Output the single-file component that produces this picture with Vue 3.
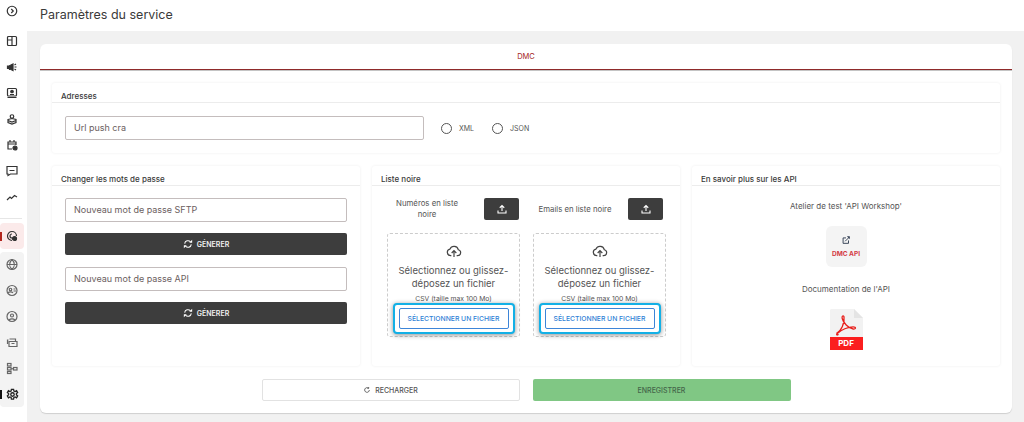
<script setup>
const passwordRows = ["Nouveau mot de passe SFTP", "Nouveau mot de passe API"];
const blacklist = [
  { label: "Numéros en liste noire" },
  { label: "Emails en liste noire" },
];
</script>

<template>
  <div class="page">
    <aside class="sidebar">
      <div class="side-top">
        <svg class="ico first" viewBox="0 0 24 24"><circle cx="12" cy="12" r="9.500" /><path d="M10.500 8l4 4-4 4" /></svg>
        <svg class="ico" viewBox="0 0 24 24"><rect x="3" y="3" width="18" height="18" rx="2" /><path d="M3 10h9M12 3v18" /></svg>
        <svg class="ico" viewBox="0 0 24 24"><path class="solid" d="M3 10v5h3l8 4V6l-8 4H3z" /><path d="M7 15v3M17 8l3-2M17 12h4M17 16l3 2" /></svg>
        <svg class="ico" viewBox="0 0 24 24"><rect x="3" y="3" width="18" height="15" rx="2" /><circle class="solid" cx="12" cy="9" r="2.500" /><path d="M8 15h8M3 21h18" /></svg>
        <svg class="ico" viewBox="0 0 24 24"><circle cx="12" cy="7" r="3.500" /><path d="M4 13l8-2 8 2v6l-8 3-8-3zM4 15l8 3 8-3" /></svg>
        <svg class="ico" viewBox="0 0 24 24"><path d="M12 20H4V6h16v6M4 10h16M8 2v5M16 2v5" /><circle class="solid" cx="18" cy="18" r="4" /></svg>
        <svg class="ico" viewBox="0 0 24 24"><path d="M2 3h20v15H9l-5 3v-3H2zM7 11h10" /></svg>
        <svg class="ico" viewBox="0 0 24 24"><path d="M2 18l6-6 3 3 6-6 5 3" /></svg>
      </div>
      <div class="side-rule"></div>
      <div class="side-active">
        <span class="mark red"></span>
        <svg class="ico" viewBox="0 0 24 24"><path d="M12 21a9 9 0 1 1 9-9" /><path d="M12 8a4 4 0 0 0 0 8" /><circle class="solid" cx="17" cy="17" r="4" /></svg>
      </div>
      <div class="side-group">
        <svg class="ico soft" viewBox="0 0 24 24"><circle cx="12" cy="12" r="10" /><path d="M2 12h20M12 2c-6 6-6 14 0 20M12 2c6 6 6 14 0 20" /></svg>
        <svg class="ico soft" viewBox="0 0 24 24"><circle cx="12" cy="12" r="10" /><circle cx="9" cy="10" r="2.500" /><path d="M4 17c2-3 8-3 10 0M15 9h4M15 13h5" /></svg>
        <svg class="ico soft" viewBox="0 0 24 24"><circle cx="12" cy="12" r="10" /><circle cx="12" cy="10" r="3" /><path d="M6 19c3-3 9-3 12 0" /></svg>
        <svg class="ico soft" viewBox="0 0 24 24"><path d="M7 5h12v4M3 15V7h2M6 10h16v10H6zM11 14h6" /></svg>
        <svg class="ico soft" viewBox="0 0 24 24"><rect x="3" y="2" width="7" height="5" /><rect x="3" y="10" width="7" height="5" /><rect x="3" y="18" width="7" height="4" /><rect x="15" y="10" width="7" height="5" /><path d="M10 12.500h5" /></svg>
        <div class="gear-wrap">
          <span class="mark dark"></span>
          <svg class="ico gear" viewBox="0 0 24 24"><circle cx="12" cy="12" r="3.200" /><path d="M10 2.500h4l.6 3 2.200 1 2.700-1.500 2 3.400-2.300 2v2.200l2.300 2-2 3.400-2.700-1.500-2.200 1-.6 3h-4l-.6-3-2.200-1-2.700 1.500-2-3.400 2.300-2v-2.200l-2.300-2 2-3.400 2.700 1.500 2.200-1z" /></svg>
        </div>
      </div>
    </aside>

    <main class="content">
      <header class="topbar">Paramètres du service</header>

      <section class="main-card">
        <div class="tab">DMC</div>

        <div class="card-body">
          <div class="panel address">
            <h2 class="panel-title">Adresses</h2>
            <div class="address-row">
              <div class="field url">Url push cra</div>
              <label class="radio"><span class="dot"></span>XML</label>
              <label class="radio"><span class="dot"></span>JSON</label>
            </div>
          </div>

          <div class="columns">
            <div class="panel">
              <h2 class="panel-title">Changer les mots de passe</h2>
              <div class="password-body">
                <template v-for="row in passwordRows" :key="row">
                  <div class="field">{{ row }}</div>
                  <button class="dark-btn">
                    <svg class="sync" viewBox="0 0 24 24"><path d="M4 11a8 8 0 0 1 14-4M20 13a8 8 0 0 1-14 4" /><path class="fill" d="M15 9h7V2zM9 15H2v7z" /></svg>
                    GÉNERER
                  </button>
                </template>
              </div>
            </div>

            <div class="panel">
              <h2 class="panel-title">Liste noire</h2>
              <div class="black-body">
                <div class="black-col" v-for="item in blacklist" :key="item.label">
                  <div class="black-head">
                    <span class="black-label">{{ item.label }}</span>
                    <button class="upload-btn">
                      <svg viewBox="0 0 24 24"><path d="M12 16V5M7.500 9.500L12 5l4.500 4.500M4 15v5h16v-5" /></svg>
                    </button>
                  </div>
                  <div class="dropzone">
                    <svg class="cloud" viewBox="0 0 24 24"><path d="M8 19H7a5 5 0 0 1-1-9.900 6.500 6.500 0 0 1 12.400 1A4.500 4.500 0 0 1 17.500 19H16" /><path d="M12 21v-9M8.500 15l3.500-3.500 3.500 3.500" /></svg>
                    <p class="drop-text">Sélectionnez ou glissez-déposez un fichier</p>
                    <p class="drop-hint">CSV (taille max 100 Mo)</p>
                    <div class="highlight">
                      <button class="select-btn">SÉLECTIONNER UN FICHIER</button>
                    </div>
                  </div>
                </div>
              </div>
            </div>

            <div class="panel">
              <h2 class="panel-title">En savoir plus sur les API</h2>
              <div class="api-body">
                <p class="api-text">Atelier de test 'API Workshop'</p>
                <div class="api-tile">
                  <svg viewBox="0 0 24 24"><path d="M18 13v7H5V7h7" /><path d="M10 15l9-9" /><path class="fill" d="M14 3h7v7z" /></svg>
                  <span>DMC API</span>
                </div>
                <p class="api-text doc">Documentation de l'API</p>
                <div class="pdf">
                  <svg class="pdf-page" viewBox="0 0 33 41">
                    <path d="M1 0h23l9 9v32H0V1z" fill="#f2f2f2" />
                    <path d="M24 0l9 9h-9z" fill="#e4e4e4" />
                    <path d="M7 24c4-2 8-10 7-16-.4-2-2.500-1-1.800 1.500 1 4 6 10 11 10.500 3 .3 3-2.200 0-2.200-5 0-12 3-16 6.700-1.300 1.300 0 2 .8 1z" fill="none" stroke="#e8201c" stroke-width="1.300" />
                  </svg>
                  <span class="pdf-band">PDF</span>
                </div>
              </div>
            </div>
          </div>

          <div class="actions">
            <button class="reload">
              <svg viewBox="0 0 24 24"><path d="M19 12a7 7 0 1 1-2.500-5.400M17 3v4h-4" /></svg>
              RECHARGER
            </button>
            <button class="save">ENREGISTRER</button>
          </div>
        </div>
      </section>
    </main>
  </div>
</template>

<style>
html,
body {
  margin: 0;
  background: #f1f1f1;
}
</style>

<style scoped>
.page {
  display: flex;
  width: 1024px;
  height: 422px;
  overflow: hidden;
  font-family: Inter, "Liberation Sans", sans-serif;
  color: #444;
  background: #f1f1f1;
}

.sidebar {
  width: 27px;
  height: 422px;
  flex-shrink: 0;
  background: #fff;
  display: flex;
  flex-direction: column;
  align-items: flex-start;
}

.side-top {
  width: 24px;
  display: flex;
  flex-direction: column;
  align-items: center;
  gap: 14px;
  padding-top: 5px;
}

.ico {
  width: 12px;
  height: 12px;
  fill: none;
  stroke: #333;
  stroke-width: 2.400;
  display: block;
}

.ico .solid {
  fill: #333;
}

.ico.first {
  margin-bottom: 4px;
}

.ico.soft {
  stroke: #666;
  width: 12px;
  height: 13px;
}

.side-rule {
  width: 22px;
  height: 1px;
  background: #e6e6e6;
  margin-top: 15px;
}

.side-active {
  width: 24px;
  height: 26px;
  margin-top: 4px;
  background: #fbeaea;
  border-radius: 4px;
  display: flex;
  align-items: center;
  justify-content: center;
  position: relative;
}

.mark {
  position: absolute;
  left: 0;
  width: 2px;
  height: 9px;
}

.mark.red {
  background: #b3261e;
}

.mark.dark {
  background: #111;
}

.side-group {
  width: 24px;
  height: 155px;
  margin-top: 3px;
  background: #f3f3f3;
  border-radius: 4px;
  display: flex;
  flex-direction: column;
  align-items: center;
  gap: 13px;
  padding-top: 6px;
  box-sizing: border-box;
}

.gear-wrap {
  display: flex;
  align-items: center;
  position: relative;
  width: 24px;
  height: 13px;
  justify-content: center;
}

.ico.gear {
  width: 13px;
  height: 13px;
  stroke: #222;
}

.content {
  flex: 1;
  min-width: 0;
}

.topbar {
  height: 31px;
  background: #fff;
  padding-left: 13px;
  font-size: 12.500px;
  line-height: 30px;
  color: #3a3a3a;
  box-sizing: border-box;
}

.main-card {
  width: 972px;
  height: 369px;
  margin: 13px 0 0 13px;
  background: #fff;
  border-radius: 6px;
  box-shadow: 0 1px 1px #cfcfcf;
}

.tab {
  height: 26px;
  line-height: 26px;
  text-align: center;
  font-size: 7.500px;
  color: #a62525;
  border-bottom: 1px solid #8f2a2a;
  box-shadow: 0 1px 0 #c4c4c4;
  box-sizing: border-box;
}

.card-body {
  padding: 13px 12px 0;
}

.panel {
  background: #fff;
  border-radius: 3px;
  box-shadow: 0 0 3px rgba(0, 0, 0, 0.075);
  min-width: 0;
}

.panel-title {
  margin: 0;
  height: 20px;
  padding: 7px 0 0 9px;
  box-sizing: border-box;
  font-size: 8px;
  line-height: 12px;
  font-weight: 500;
  color: #3a3a3a;
  border-bottom: 1px solid #ececec;
}

.address {
  height: 70px;
}

.address-row {
  display: flex;
  align-items: center;
  padding: 13px 0 0 13px;
}

.field {
  height: 24px;
  line-height: 22px;
  border: 1px solid #c4bdbd;
  border-radius: 2px;
  padding-left: 8px;
  font-size: 9px;
  color: #6b6060;
  box-sizing: border-box;
}

.url {
  width: 359px;
  margin-right: 17px;
}

.radio {
  display: flex;
  align-items: center;
  gap: 7px;
  font-size: 7px;
  color: #555;
  margin-right: 18px;
}

.dot {
  width: 11px;
  height: 11px;
  border: 1.300px solid #555;
  border-radius: 50%;
  box-sizing: border-box;
}

.columns {
  display: grid;
  grid-template-columns: repeat(3, 308px);
  gap: 12px;
  margin-top: 13px;
}

.columns .panel {
  height: 200px;
}

.password-body {
  padding: 12px 13px 0;
  display: flex;
  flex-direction: column;
}

.password-body .field {
  height: 24px;
  margin-bottom: 11px;
}

.dark-btn {
  height: 22px;
  margin-bottom: 12px;
  background: #3d3d3d;
  border: 0;
  border-radius: 2px;
  color: #f0f0f0;
  font-family: inherit;
  font-size: 7px;
  font-weight: 600;
  display: flex;
  align-items: center;
  justify-content: center;
  gap: 4px;
}

.sync {
  width: 10px;
  height: 10px;
  fill: none;
  stroke: #fff;
  stroke-width: 2.500;
}

.sync .fill {
  fill: #fff;
  stroke: none;
}

.black-body {
  display: grid;
  grid-template-columns: 133px 133px;
  gap: 13px;
  padding: 12px 14px 0 15px;
}

.black-head {
  display: flex;
  align-items: center;
  height: 22px;
  margin-bottom: 13px;
}

.black-label {
  width: 78px;
  margin-left: 1px;
  margin-right: 18px;
  text-align: center;
  font-size: 7.800px;
  line-height: 11px;
  color: #555;
}

.black-col:last-child .black-label {
  width: 84px;
  margin-left: 0;
  margin-right: 11px;
  white-space: nowrap;
}

.upload-btn {
  width: 35px;
  height: 22px;
  flex-shrink: 0;
  background: #3d3d3d;
  border: 0;
  border-radius: 2px;
  padding: 0;
  display: flex;
  align-items: center;
  justify-content: center;
}

.upload-btn svg {
  width: 12px;
  height: 12px;
  fill: none;
  stroke: #fff;
  stroke-width: 2.200;
}

.dropzone {
  height: 104px;
  border: 1px dashed #ccc;
  border-radius: 3px;
  box-sizing: border-box;
  display: flex;
  flex-direction: column;
  align-items: center;
  padding-top: 9px;
}

.cloud {
  width: 16px;
  height: 16px;
  fill: none;
  stroke: #444;
  stroke-width: 1.800;
  flex-shrink: 0;
}

.drop-text {
  margin: 5px 0 0;
  width: 120px;
  text-align: center;
  font-size: 9.500px;
  line-height: 13px;
  color: #555;
}

.drop-hint {
  margin: 4px 0 0;
  font-size: 6.800px;
  line-height: 10px;
  color: #555;
}

.highlight {
  margin-top: -1px;
  padding: 3px 4px;
  border: 2px solid #13b0e6;
  border-radius: 4px;
  box-shadow: 0 1px 5px rgba(0, 0, 0, 0.45);
  background: #fff;
}

.select-btn {
  display: block;
  width: 110px;
  height: 21px;
  border: 1px solid #3d85d8;
  border-radius: 2px;
  background: #fff;
  color: #2f7fd6;
  font-family: inherit;
  font-size: 6.800px;
  font-weight: 500;
  padding: 0;
  white-space: nowrap;
}

.api-body {
  display: flex;
  flex-direction: column;
  align-items: center;
  padding-top: 14px;
}

.api-text {
  margin: 0;
  font-size: 8px;
  line-height: 12px;
  color: #555;
}

.api-tile {
  width: 41px;
  height: 41px;
  margin-top: 14px;
  background: #f4f4f4;
  border-radius: 6px;
  display: flex;
  flex-direction: column;
  align-items: center;
  justify-content: center;
  gap: 5px;
  font-size: 6.500px;
  font-weight: 700;
  color: #d33a45;
}

.api-tile svg {
  width: 10px;
  height: 10px;
  fill: none;
  stroke: #2d3a4f;
  stroke-width: 2.200;
}

.api-tile .fill {
  fill: #2d3a4f;
  stroke: none;
}

.api-text.doc {
  margin-top: 16px;
}

.pdf {
  position: relative;
  width: 33px;
  height: 41px;
  margin-top: 14px;
}

.pdf-page {
  display: block;
  width: 33px;
  height: 41px;
}

.pdf-band {
  position: absolute;
  left: 0;
  right: 0;
  bottom: 0;
  height: 13px;
  background: #fb1f1f;
  color: #fff;
  text-align: center;
  font-size: 8px;
  line-height: 13px;
  font-weight: 700;
}

.actions {
  display: flex;
  justify-content: center;
  gap: 13px;
  margin-top: 13px;
}

.actions button {
  width: 258px;
  height: 22px;
  border-radius: 2px;
  font-family: inherit;
  font-size: 7px;
  font-weight: 500;
  display: flex;
  align-items: center;
  justify-content: center;
  gap: 4px;
  padding: 0;
}

.reload {
  background: #fff;
  border: 1px solid #e2e2e2;
  color: #555;
}

.reload svg {
  width: 8px;
  height: 8px;
  fill: none;
  stroke: #444;
  stroke-width: 2.400;
}

.save {
  background: #80c784;
  border: 0;
  color: #44664a;
}
</style>
